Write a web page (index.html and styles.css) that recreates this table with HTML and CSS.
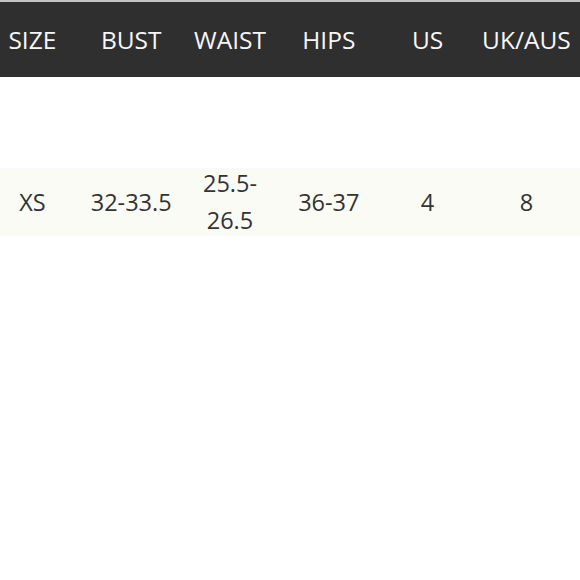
FILE: index.html
```html
<!DOCTYPE html>
<html>
<head>
<meta charset="utf-8">
<link rel="stylesheet" href="styles.css">
</head>
<body>
<div class="chart">
  <div class="head">
    <div class="grid">
      <div class="cell">SIZE</div>
      <div class="cell">BUST</div>
      <div class="cell">WAIST</div>
      <div class="cell">HIPS</div>
      <div class="cell">US</div>
      <div class="cell">UK/AUS</div>
    </div>
  </div>
  <div class="row">
    <div class="grid">
      <div class="cell">XS</div>
      <div class="cell">32-33.5</div>
      <div class="cell">25.5-<br>26.5</div>
      <div class="cell">36-37</div>
      <div class="cell">4</div>
      <div class="cell">8</div>
    </div>
  </div>
</div>
</body>
</html>
```
FILE: styles.css
```css
html, body {
  margin: 0;
  padding: 0;
  background: #ffffff;
}
body {
  width: 580px;
  height: 580px;
  overflow: hidden;
  font-family: "Open Sans", "Noto Sans", sans-serif;
}
.chart {
  display: flex;
  flex-direction: column;
}
.grid {
  display: grid;
  grid-template-columns: repeat(6, 98.8px);
  margin-left: -17px;
}
.cell {
  text-align: center;
}
.head {
  border-top: 2px solid #c4c4c4;
  background: #2f2f2f;
  color: #f7f7f7;
  height: 75px;
  display: flex;
  align-items: center;
  font-size: 24.5px;
}
.head .grid {
  width: 100%;
}
.row {
  margin-top: 91px;
  height: 68px;
  background: #fbfbf5;
  display: flex;
  align-items: center;
  color: #333333;
  font-size: 23.5px;
  line-height: 37px;
}
.row .grid {
  width: 100%;
  align-items: center;
}
```
